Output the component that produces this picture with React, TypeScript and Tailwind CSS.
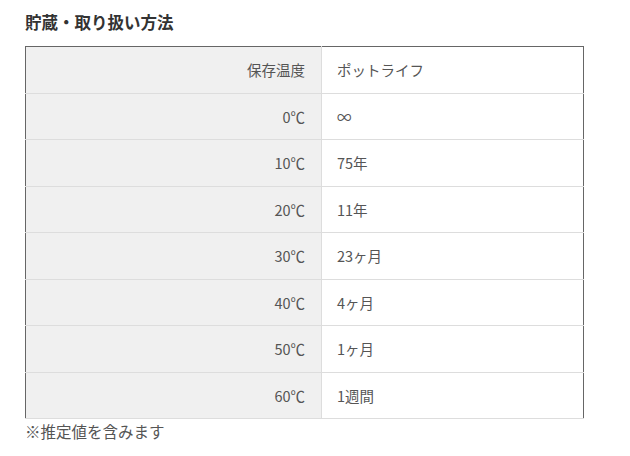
const rows: [string, string][] = [
  ['0℃', '∞'],
  ['10℃', '75年'],
  ['20℃', '11年'],
  ['30℃', '23ヶ月'],
  ['40℃', '4ヶ月'],
  ['50℃', '1ヶ月'],
  ['60℃', '1週間'],
];

export default function App() {
  return (
    <div
      className="w-[630px] h-[456px] bg-white pl-[25px] pt-[10px] text-[#555]"
      style={{ fontFamily: '"Noto Sans CJK JP", "Noto Sans", sans-serif' }}
    >
      <h2 className="text-[16.5px] leading-[24px] font-bold text-[#333]">貯蔵・取り扱い方法</h2>
      <table className="mt-[12px] w-[559px] border-collapse border border-[#666] text-[14.5px]">
        <tbody>
          <tr className="h-[47px]">
            <th className="w-[296px] bg-[#f0f0f0] pr-[16px] text-right font-normal border-b border-[#ddd]">保存温度</th>
            <td className="pl-[15px] border-b border-l border-[#ddd]">ポットライフ</td>
          </tr>
          {rows.map(([temp, life], i) => (
            <tr key={temp} className={i % 2 === 0 ? 'h-[46px]' : 'h-[47px]'}>
              <th className="bg-[#f0f0f0] pr-[16px] text-right font-normal border-b border-[#ddd]">{temp}</th>
              <td className="pl-[15px] border-b border-l border-[#ddd]">{life}</td>
            </tr>
          ))}
        </tbody>
      </table>
      <p className="text-[15.5px] leading-[24px]">※推定値を含みます</p>
    </div>
  );
}
